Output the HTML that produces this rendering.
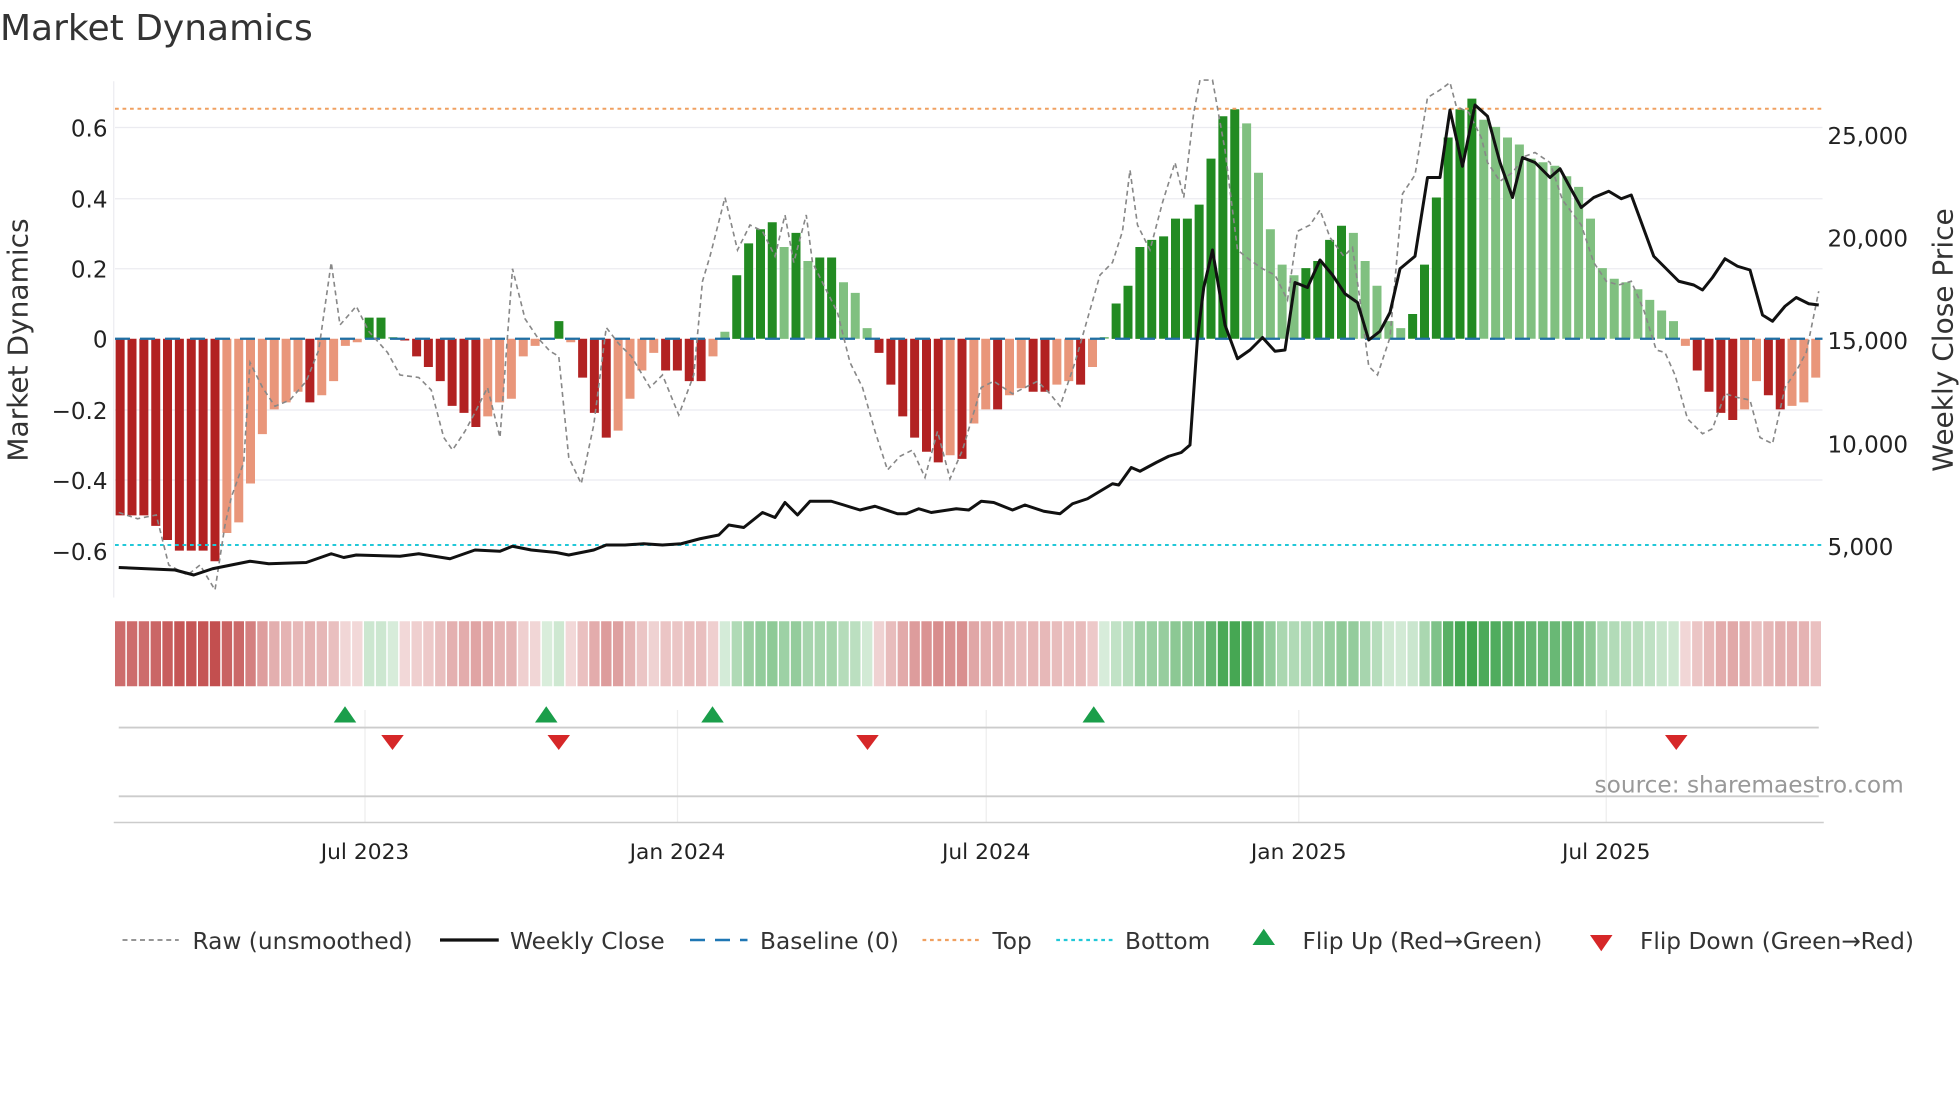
<!DOCTYPE html>
<html><head><meta charset="utf-8"><style>
html,body{margin:0;padding:0;background:#fff;width:1960px;height:1102px;overflow:hidden}
svg{display:block;font-family:"DejaVu Sans","Liberation Sans",sans-serif}
</style></head><body>
<svg id="s" width="1960" height="1102" viewBox="0 0 1568 881.6" xmlns="http://www.w3.org/2000/svg">
<rect width="1568" height="882" fill="#fff"/>
<text x="0" y="32" font-size="28.8" fill="#333">Market Dynamics</text>
<g stroke="#ebebf0" stroke-width="1">
<line x1="92" x2="1458" y1="102" y2="102"/><line x1="92" x2="1458" y1="159" y2="159"/><line x1="92" x2="1458" y1="215" y2="215"/><line x1="92" x2="1458" y1="328" y2="328"/><line x1="92" x2="1458" y1="384" y2="384"/>
<line x1="91" x2="91" y1="65" y2="478"/>
</g>
<g font-size="18.4" fill="#222" text-anchor="end">
<text x="86" y="109">0.6</text><text x="86" y="166">0.4</text><text x="86" y="222">0.2</text><text x="86" y="278">0</text><text x="86" y="335">−0.2</text><text x="86" y="391">−0.4</text><text x="86" y="448">−0.6</text>
</g>
<g font-size="18.4" fill="#222">
<text x="1462" y="115">25,000</text><text x="1462" y="197">20,000</text><text x="1462" y="279">15,000</text><text x="1462" y="362">10,000</text><text x="1462" y="444">5,000</text>
</g>
<text transform="translate(22,272) rotate(-90)" font-size="22.4" fill="#333" text-anchor="middle">Market Dynamics</text>
<text transform="translate(1562,272) rotate(-90)" font-size="22.4" fill="#333" text-anchor="middle">Weekly Close Price</text>
<g id="bars"></g>
<line x1="92" x2="1458" y1="87" y2="87" stroke="#f0a060" stroke-width="1.6" stroke-dasharray="3,3"/>
<line x1="92" x2="1458" y1="436" y2="436" stroke="#22c8d8" stroke-width="1.6" stroke-dasharray="3,3"/>
<line x1="92" x2="1458" y1="271" y2="271" stroke="#1f6fa4" stroke-width="1.8" stroke-dasharray="12,8"/>
<polyline id="raw" fill="none" stroke="#888" stroke-width="1.3" stroke-dasharray="4,3"/>
<polyline id="close" fill="none" stroke="#111" stroke-width="2.4" stroke-linejoin="round"/>
<g id="strip"></g>
<g stroke="#eeeeee" stroke-width="1">
<line x1="292" x2="292" y1="568" y2="658"/><line x1="542" x2="542" y1="568" y2="658"/><line x1="789" x2="789" y1="568" y2="658"/><line x1="1039" x2="1039" y1="568" y2="658"/><line x1="1285" x2="1285" y1="568" y2="658"/>
</g>
<line x1="95" x2="1455" y1="582" y2="582" stroke="#ccc" stroke-width="1.5"/>
<line x1="95" x2="1455" y1="637" y2="637" stroke="#ccc" stroke-width="1.5"/>
<line x1="91" x2="1459" y1="658" y2="658" stroke="#ccc" stroke-width="1.2"/>
<g fill="#1a9e4a" id="ups"></g><g fill="#d62728" id="downs"></g>
<text x="1523" y="634" font-size="18.6" fill="#999" text-anchor="end">source: sharemaestro.com</text>
<g font-size="17.4" fill="#222" text-anchor="middle">
<text x="292" y="687">Jul 2023</text><text x="542" y="687">Jan 2024</text><text x="789" y="687">Jul 2024</text><text x="1039" y="687">Jan 2025</text><text x="1285" y="687">Jul 2025</text>
</g>
<g font-size="18.6" fill="#333">
<line x1="98" x2="143" y1="752" y2="752" stroke="#888" stroke-width="1.4" stroke-dasharray="4,3"/><text x="154" y="759">Raw (unsmoothed)</text>
<line x1="352" x2="399" y1="752" y2="752" stroke="#111" stroke-width="2.6"/><text x="408" y="759">Weekly Close</text>
<line x1="552" x2="598" y1="752" y2="752" stroke="#1f77b4" stroke-width="2" stroke-dasharray="12,8"/><text x="608" y="759">Baseline (0)</text>
<line x1="738" x2="784" y1="752" y2="752" stroke="#f0a060" stroke-width="1.8" stroke-dasharray="3,3"/><text x="794" y="759">Top</text>
<line x1="845" x2="891" y1="752" y2="752" stroke="#22c8d8" stroke-width="1.8" stroke-dasharray="3,3"/><text x="900" y="759">Bottom</text>
<polygon points="1011,743 1020,756 1002,756" fill="#1a9e4a"/><text x="1042" y="759">Flip Up (Red→Green)</text>
<polygon points="1272,748 1290,748 1281,761" fill="#d62728"/><text x="1312" y="759">Flip Down (Green→Red)</text>
</g>
</svg>
<script>
var V=[-0.5,-0.5,-0.5,-0.53,-0.57,-0.6,-0.6,-0.6,-0.63,-0.55,-0.52,-0.41,-0.27,-0.2,-0.18,-0.15,-0.18,-0.16,-0.12,-0.02,-0.01,0.06,0.06,0.005,-0.005,-0.05,-0.08,-0.12,-0.19,-0.21,-0.25,-0.22,-0.18,-0.17,-0.05,-0.02,0.003,0.05,-0.01,-0.11,-0.21,-0.28,-0.26,-0.17,-0.09,-0.04,-0.09,-0.09,-0.12,-0.12,-0.05,0.02,0.18,0.27,0.31,0.33,0.26,0.3,0.22,0.23,0.23,0.16,0.13,0.03,-0.04,-0.13,-0.22,-0.28,-0.32,-0.35,-0.33,-0.34,-0.24,-0.2,-0.2,-0.16,-0.14,-0.15,-0.15,-0.13,-0.12,-0.13,-0.08,0.005,0.1,0.15,0.26,0.28,0.29,0.34,0.34,0.38,0.51,0.63,0.65,0.61,0.47,0.31,0.21,0.18,0.2,0.22,0.28,0.32,0.3,0.22,0.15,0.05,0.03,0.07,0.21,0.4,0.57,0.65,0.68,0.62,0.6,0.57,0.55,0.51,0.5,0.49,0.46,0.43,0.34,0.2,0.17,0.16,0.14,0.11,0.08,0.05,-0.02,-0.09,-0.15,-0.21,-0.23,-0.2,-0.12,-0.16,-0.2,-0.19,-0.18,-0.11];
var n=V.length,p=(1458-92)/n,b='',st='';
for(var i=0;i<n;i++){var v=V[i],x=92+i*p,pv=i?V[i-1]:0,dark=Math.abs(v)>=Math.abs(pv)-0.001;
var c=v>=0?(dark?'#228b22':'#80c080'):(dark?'#b22222':'#e9967a');
var y0=271,h=Math.abs(v)*282.5;b+='<rect x="'+(x+0.5).toFixed(1)+'" y="'+(v>=0?y0-h:y0).toFixed(1)+'" width="'+(p-2.3).toFixed(1)+'" height="'+h.toFixed(1)+'" fill="'+c+'"/>';
var a=0.18+0.72*Math.min(1,Math.abs(v)/0.68);
st+='<rect x="'+x.toFixed(1)+'" y="497" width="'+(p-1.2).toFixed(1)+'" height="52" fill="'+(v>=0?'#2a9a3a':'#b83030')+'" fill-opacity="'+a.toFixed(2)+'"/>';}
document.getElementById('bars').innerHTML=b;document.getElementById('strip').innerHTML=st;
document.getElementById('raw').setAttribute('points',"95,410 110,415 125,412 135,452 150,460 160,452 172,472 180,420 185,398 195,370 200,290 210,310 220,325 232,320 245,305 255,280 265,210 272,260 285,245 295,265 310,282 320,300 335,302 345,312 355,350 362,360 372,345 380,330 390,310 400,350 410,215 420,255 430,270 440,281 447,285 455,366 465,387 475,340 485,262 495,275 505,285 520,310 530,300 543,332 555,300 562,225 568,205 580,158 590,200 600,180 610,185 620,205 628,172 635,210 645,172 650,210 660,230 670,250 680,290 690,310 700,345 710,376 720,365 730,360 740,382 750,345 760,383 770,360 785,310 795,305 810,315 830,305 840,315 848,325 860,290 870,255 880,220 890,210 898,185 904,136 910,180 920,200 930,162 940,130 947,158 955,90 960,64 970,64 980,120 990,200 1000,208 1010,215 1020,220 1030,240 1038,185 1048,180 1056,168 1064,190 1075,205 1082,198 1088,240 1095,293 1102,300 1112,270 1122,155 1132,140 1142,78 1152,72 1160,66 1165,85 1175,90 1185,110 1190,130 1200,145 1210,138 1220,125 1228,122 1240,130 1250,160 1265,180 1275,210 1285,225 1295,228 1305,225 1315,248 1325,280 1332,282 1340,300 1350,335 1362,347 1370,343 1380,315 1390,318 1400,320 1408,350 1418,355 1428,310 1438,295 1445,282 1455,233");
document.getElementById('close').setAttribute('points',"95,454 140,456 155,460 170,455 185,452 200,449 215,451 245,450 265,443 275,446 285,444 320,445 335,443 360,447 380,440 400,441 410,437 425,440 445,442 455,444 475,440 485,436 500,436 515,435 530,436 545,435 560,431 575,428 583,420 595,422 610,410 620,414 628,402 638,412 648,401 665,401 675,404 688,408 700,405 718,411 725,411 735,407 745,410 765,407 775,408 785,401 795,402 810,408 820,404 835,409 848,411 858,403 870,399 880,393 890,387 895,388 905,374 912,377 925,370 935,365 945,362 952,356 958,270 963,230 970,200 975,230 980,260 990,287 1000,280 1010,270 1020,281 1028,280 1036,226 1046,230 1056,208 1066,220 1076,235 1086,242 1095,272 1104,265 1112,250 1120,215 1132,205 1142,142 1152,142 1160,88 1170,133 1180,84 1190,93 1200,130 1210,158 1218,126 1228,130 1240,142 1248,135 1255,148 1265,166 1275,158 1287,153 1297,159 1305,156 1312,175 1323,205 1333,215 1343,225 1355,228 1362,232 1370,222 1380,207 1390,213 1400,216 1410,252 1418,257 1428,245 1437,238 1447,243 1455,244");
var u='',d='';[276,437,570,875].forEach(function(x){u+='<polygon points="'+x+',565 '+(x+9)+',578 '+(x-9)+',578"/>';});
[314,447,694,1341].forEach(function(x){d+='<polygon points="'+(x-9)+',588 '+(x+9)+',588 '+x+',600"/>';});
document.getElementById('ups').innerHTML=u;document.getElementById('downs').innerHTML=d;
</script>
</body></html>
